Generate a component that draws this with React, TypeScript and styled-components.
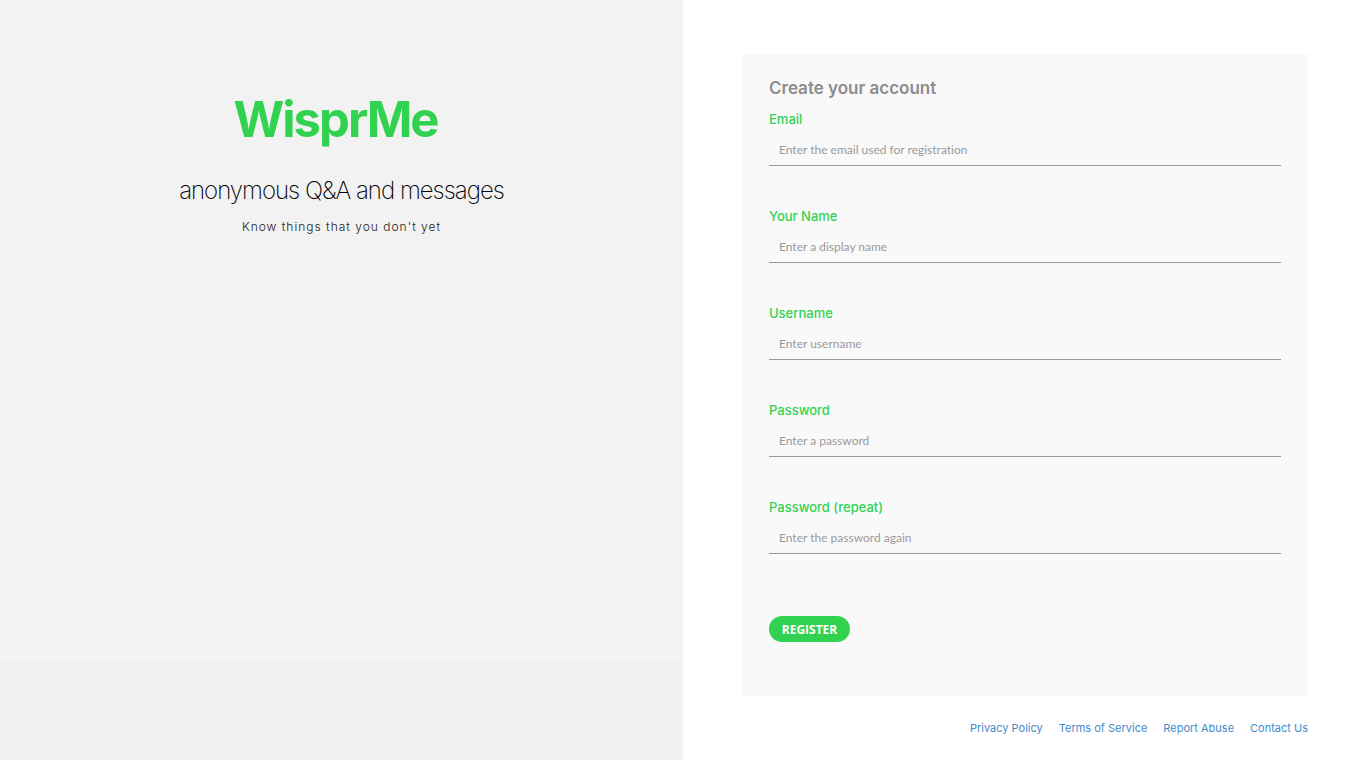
import React from "react";
import styled, { createGlobalStyle } from "styled-components";

const GlobalStyle = createGlobalStyle`
  *, *::before, *::after { box-sizing: border-box; }
  body { margin: 0; background: #fff; font-family: "Inter", "Open Sans", sans-serif; }
`;

const Page = styled.div`
  display: grid;
  grid-template-columns: 1fr 1fr;
  min-height: 100vh;
`;

const Intro = styled.section`
  display: flex;
  flex-direction: column;
  background: #f2f2f2;
  text-align: center;
`;

const Hero = styled.div`
  display: flex;
  flex: 1;
  flex-direction: column;
  align-items: center;
  padding-top: 85px;
`;

const Brand = styled.h1`
  margin: 0;
  padding-right: 12px;
  color: #32d251;
  font-size: 49px;
  font-weight: 700;
  line-height: 70px;
  letter-spacing: -2px;
`;

const Tagline = styled.h2`
  margin: 20px 0 0;
  color: #000;
  font-size: 24px;
  font-weight: 200;
  line-height: 32px;
  letter-spacing: -1px;
`;

const Subline = styled.p`
  margin: 10px 0 0;
  color: #222;
  font-size: 12px;
  font-weight: 300;
  line-height: 20px;
  letter-spacing: 1px;
`;

const IntroFooter = styled.div`
  height: 103px;
  border-top: 1px solid #f7f7f7;
  background: #f1f1f1;
`;

const Main = styled.main`
  padding: 54px 58px 22px 59px;
`;

const Card = styled.form`
  padding: 24px 27px 54px;
  background: #f9f9f9;
`;

const Title = styled.h3`
  margin: 0 0 11px;
  color: #8c8c8c;
  font-size: 17px;
  font-weight: 600;
  line-height: 20px;
`;

const Field = styled.div`
  display: flex;
  flex-direction: column;
  height: 97px;
`;

const Label = styled.label`
  color: #32d251;
  font-size: 13px;
  font-weight: 500;
  line-height: 20px;
`;

const Input = styled.input`
  width: 100%;
  height: 32px;
  margin-top: 5px;
  padding: 0 10px;
  border: 0;
  border-bottom: 1px solid #999;
  background: transparent;
  color: #555;
  font-family: "Lato", "Open Sans", sans-serif;
  font-size: 12px;
  font-variant-ligatures: none;
  &::placeholder { color: #999; opacity: 1; }
`;

const RegisterButton = styled.button`
  min-width: 81px;
  height: 26px;
  margin-top: 22px;
  padding: 0 12px;
  border: 0;
  border-radius: 13px;
  background: #32d251;
  color: #fff;
  font-family: "Open Sans", sans-serif;
  font-size: 12px;
  font-weight: 700;
`;

const Links = styled.nav`
  display: flex;
  flex-wrap: wrap;
  justify-content: flex-end;
  gap: 16px;
  margin-top: 22px;
`;

const FooterLink = styled.a`
  color: #428bca;
  font-size: 11px;
  line-height: 20px;
  text-decoration: none;
`;

const fields = [
  { id: "email", label: "Email", type: "email", hint: "Enter the email used for registration" },
  { id: "name", label: "Your Name", type: "text", hint: "Enter a display name" },
  { id: "username", label: "Username", type: "text", hint: "Enter username" },
  { id: "password", label: "Password", type: "password", hint: "Enter a password" },
  { id: "repeat", label: "Password (repeat)", type: "password", hint: "Enter the password again" },
];

const links = ["Privacy Policy", "Terms of Service", "Report Abuse", "Contact Us"];

export default function App() {
  return (
    <Page>
      <GlobalStyle />
      <Intro>
        <Hero>
          <Brand>WisprMe</Brand>
          <Tagline>anonymous Q&amp;A and messages</Tagline>
          <Subline>Know things that you don't yet</Subline>
        </Hero>
        <IntroFooter />
      </Intro>
      <Main>
        <Card>
          <Title>Create your account</Title>
          {fields.map((f) => (
            <Field key={f.id}>
              <Label htmlFor={f.id}>{f.label}</Label>
              <Input id={f.id} type={f.type} placeholder={f.hint} />
            </Field>
          ))}
          <RegisterButton type="button">REGISTER</RegisterButton>
        </Card>
        <Links>
          {links.map((text) => (
            <FooterLink key={text} href="#">{text}</FooterLink>
          ))}
        </Links>
      </Main>
    </Page>
  );
}
